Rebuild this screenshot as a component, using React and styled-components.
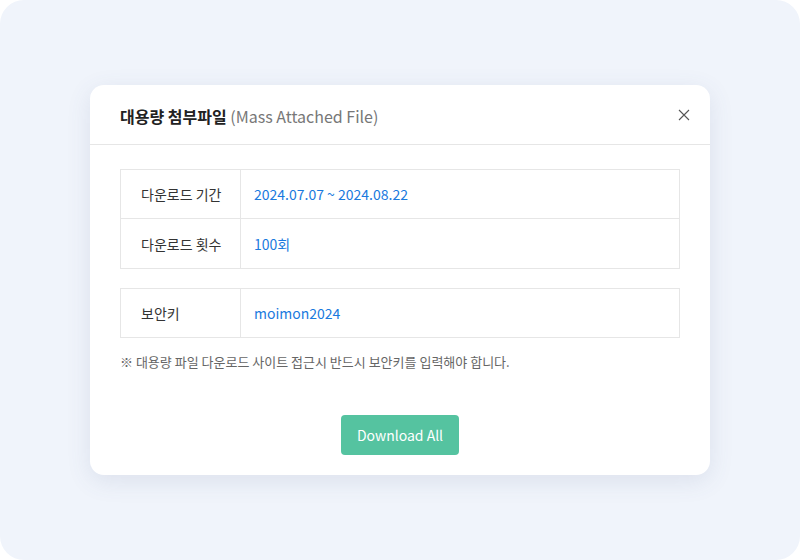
import React from "react";
import styled, { createGlobalStyle } from "styled-components";

const GlobalStyle = createGlobalStyle`
	html, body {
		margin: 0;
		padding: 0;
		background: #ffffff;
	}
	* {
		box-sizing: border-box;
	}
	body {
		font-family: "Noto Sans CJK KR", "Noto Sans", sans-serif;
	}
`;

const Page = styled.div`
	width: 800px;
	height: 560px;
	background: #f0f4fb;
	border-radius: 24px;
	display: flex;
	align-items: center;
	justify-content: center;
`;

const Modal = styled.div`
	width: 620px;
	height: 390px;
	background: #fff;
	border-radius: 14px;
	box-shadow: 0 6px 24px rgba(70, 90, 130, 0.12);
	display: flex;
	flex-direction: column;
`;

const Header = styled.div`
	height: 60px;
	padding: 2px 14px 0 30px;
	display: flex;
	align-items: center;
	justify-content: space-between;
	border-bottom: 1px solid #e6e6e6;
`;

const Title = styled.h2`
	margin: 0;
	font-size: 16px;
	font-weight: 700;
	color: #222;
`;

const SubTitle = styled.span`
	font-weight: 400;
	color: #777;
`;

const CloseButton = styled.button`
	width: 24px;
	height: 24px;
	margin-top: -2px;
	padding: 0;
	border: 0;
	background: none;
	cursor: pointer;
	display: flex;
	align-items: center;
	justify-content: center;
	color: #555;
`;

const Body = styled.div`
	padding: 24px 30px 20px;
	display: flex;
	flex-direction: column;
	flex: 1;
`;

const Table = styled.div`
	border: 1px solid #e6e6e6;
	margin-bottom: ${props => (props.last ? "0" : "19px")};
`;

const Row = styled.div`
	display: grid;
	grid-template-columns: 120px 1fr;
	height: ${props => (props.first ? "48px" : "50px")};
	border-top: ${props => (props.first ? "0" : "1px solid #e6e6e6")};
`;

const Label = styled.div`
	display: flex;
	align-items: center;
	padding-left: 20px;
	font-size: 14px;
	color: #333;
	border-right: 1px solid #e6e6e6;
`;

const Value = styled.div`
	display: flex;
	align-items: center;
	padding-left: 13px;
	font-size: 14px;
	color: #1a7ade;
`;

const Note = styled.p`
	margin: 14px 0 0;
	font-size: 13px;
	color: #666;
`;

const Footer = styled.div`
	margin-top: auto;
	display: flex;
	justify-content: center;
`;

const DownloadButton = styled.button`
	width: 118px;
	height: 40px;
	border: 0;
	border-radius: 4px;
	background: #55c3a0;
	color: #fff;
	font-family: "Noto Sans CJK KR", "Noto Sans", sans-serif;
	font-size: 14px;
	cursor: pointer;
`;

const CloseIcon = () => (
	<svg width="12" height="12" viewBox="0 0 12 12" fill="none">
		<path d="M1 1L11 11M11 1L1 11" stroke="currentColor" strokeWidth="1.1" />
	</svg>
);

export default function App() {
	return (
		<>
			<GlobalStyle />
			<Page>
				<Modal>
					<Header>
						<Title>
							대용량 첨부파일 <SubTitle>(Mass Attached File)</SubTitle>
						</Title>
						<CloseButton aria-label="닫기">
							<CloseIcon />
						</CloseButton>
					</Header>
					<Body>
						<Table>
							<Row first>
								<Label>다운로드 기간</Label>
								<Value>2024.07.07 ~ 2024.08.22</Value>
							</Row>
							<Row>
								<Label>다운로드 횟수</Label>
								<Value>100회</Value>
							</Row>
						</Table>
						<Table last>
							<Row first>
								<Label>보안키</Label>
								<Value>moimon2024</Value>
							</Row>
						</Table>
						<Note>※ 대용량 파일 다운로드 사이트 접근시 반드시 보안키를 입력해야 합니다.</Note>
						<Footer>
							<DownloadButton>Download All</DownloadButton>
						</Footer>
					</Body>
				</Modal>
			</Page>
		</>
	);
}
